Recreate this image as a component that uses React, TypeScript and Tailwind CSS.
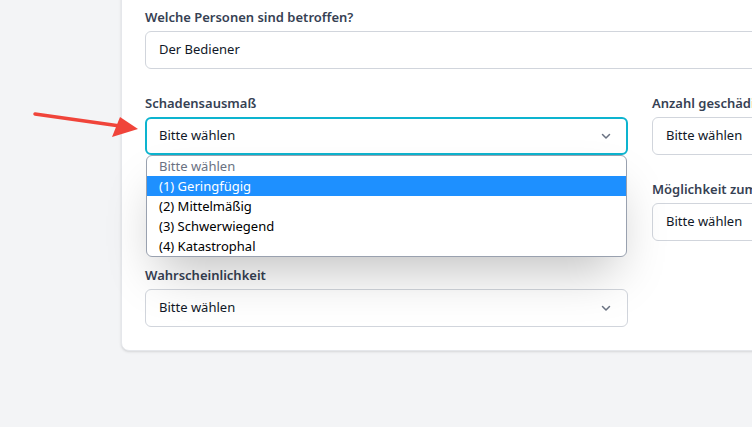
import React from "react";

const font = { fontFamily: '"Noto Sans", "Open Sans", sans-serif' };

const Chevron = () => (
  <svg width="12" height="12" viewBox="0 0 12 12" className="text-gray-500">
    <path d="M2.5 4.5 L6 8 L9.5 4.5" fill="none" stroke="currentColor" strokeWidth="1.5" strokeLinecap="round" strokeLinejoin="round" />
  </svg>
);

const Label = ({ children }: { children: React.ReactNode }) => (
  <label className="block h-5 leading-5 mb-1 text-[13px] font-semibold text-gray-700 whitespace-nowrap">
    {children}
  </label>
);

const Select = ({ focused = false }: { focused?: boolean }) => (
  <div
    className={
      focused
        ? "h-[38px] flex items-center justify-between rounded-md border-2 border-[#0db4cf] pl-[12px] pr-[14px] bg-white"
        : "h-[38px] flex items-center justify-between rounded-md border border-gray-300 pl-[13px] pr-[15px] bg-white"
    }
  >
    <span className="text-[13px] text-gray-900 whitespace-nowrap">Bitte wählen</span>
    <Chevron />
  </div>
);

const options = ["(1) Geringfügig", "(2) Mittelmäßig", "(3) Schwerwiegend", "(4) Katastrophal"];

export default function App() {
  return (
    <div className="relative w-[752px] h-[427px] overflow-hidden bg-gray-100" style={font}>
      <div className="ml-[121px] -mt-[17px] w-[1100px] bg-white rounded-lg border border-gray-200 shadow-sm pl-[23px] pr-6 pt-[23px] pb-[23px]">
        <div className="mb-6">
          <Label>Welche Personen sind betroffen?</Label>
          <div className="h-[38px] flex items-center rounded-md border border-gray-300 px-[13px]">
            <span className="text-[13px] text-gray-900">Der Bediener</span>
          </div>
        </div>
        <div className="grid grid-cols-[483px_483px] gap-x-6 gap-y-6">
          <div className="relative z-10">
            <Label>Schadensausmaß</Label>
            <Select focused />
            <ul className="absolute left-px right-px top-[62px] bg-white border border-gray-400 rounded-md shadow-2xl overflow-hidden text-[13px]">
              <li className="h-5 leading-5 pl-3 text-gray-500">Bitte wählen</li>
              {options.map((o, i) => (
                <li
                  key={o}
                  className={
                    i === 0
                      ? "h-5 leading-5 pl-3 bg-[#1e90ff] text-white"
                      : "h-5 leading-5 pl-3 text-black"
                  }
                >
                  {o}
                </li>
              ))}
            </ul>
          </div>
          <div>
            <Label>Anzahl geschädigter Personen</Label>
            <Select />
          </div>
          {/* field hidden under the open list */}
          <div className="h-[62px]" />
          <div>
            <Label>Möglichkeit zum Ausweichen</Label>
            <Select />
          </div>
          <div>
            <Label>Wahrscheinlichkeit</Label>
            <Select />
          </div>
        </div>
      </div>
      <svg className="absolute left-0 top-0" width="160" height="160" viewBox="0 0 160 160">
        <line x1="35" y1="114" x2="120" y2="126" stroke="#f0443a" strokeWidth="3.5" strokeLinecap="round" />
        <polygon points="138,129 120,117 112,137" fill="#f0443a" />
      </svg>
    </div>
  );
}
